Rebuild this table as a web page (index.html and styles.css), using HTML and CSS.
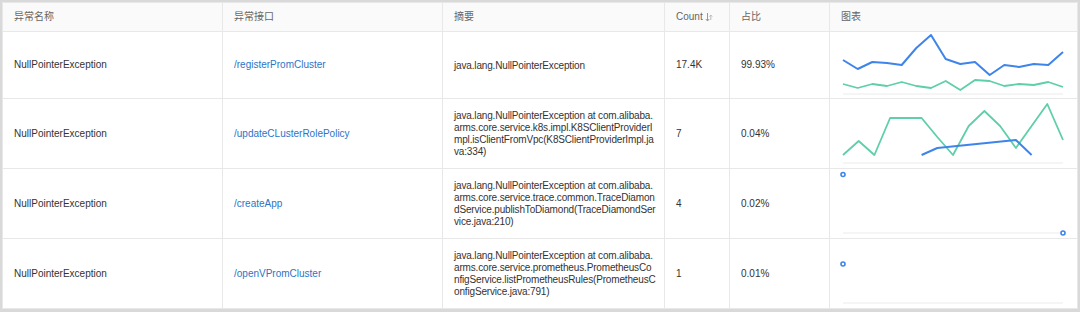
FILE: index.html
```html
<!DOCTYPE html>
<html lang="zh">
<head>
<meta charset="utf-8">
<title>异常列表</title>
<link rel="stylesheet" href="styles.css">
</head>
<body>
<div class="frame">
<table class="grid">
  <colgroup>
    <col class="c1"><col class="c2"><col class="c3"><col class="c4"><col class="c5"><col class="c6">
  </colgroup>
  <thead>
    <tr>
      <th>异常名称</th>
      <th>异常接口</th>
      <th>摘要</th>
      <th><span class="sort">Count <svg class="sort-ico" width="8" height="10" viewBox="0 0 8 10"><path d="M2.5 1v8M0.8 7l1.7 2 1.7-2" fill="none" stroke="#999" stroke-width="1"/><path d="M5.8 8V3M4.4 4.6l1.4-1.6 1.4 1.6" fill="none" stroke="#bbb" stroke-width="1"/></svg></span></th>
      <th>占比</th>
      <th>图表</th>
    </tr>
  </thead>
  <tbody>
    <tr class="r1">
      <td>NullPointerException</td>
      <td><a class="link" href="#">/registerPromCluster</a></td>
      <td class="sum">java.lang.NullPointerException</td>
      <td>17.4K</td>
      <td>99.93%</td>
      <td class="chart">
        <svg class="spark" width="247" height="62" viewBox="0 0 247 62">
          <line x1="13" y1="60" x2="233" y2="60" class="axis"/>
          <polyline class="blue" points="13,26 27.7,35 42.3,28 57,29 71.7,31 86.3,14 101,1 115.7,25 130.3,30 145,28 159.7,41 174.3,31 189,33 203.7,30 218.3,31 233,18"/>
          <polyline class="green" points="13,50 27.7,54 42.3,50 57,52 71.7,48 86.3,52 101,54 115.7,47 130.3,56 145,46 159.7,47 174.3,52 189,50 203.7,51 218.3,48 233,53"/>
        </svg>
      </td>
    </tr>
    <tr>
      <td>NullPointerException</td>
      <td><a class="link" href="#">/updateCLusterRolePolicy</a></td>
      <td class="sum">java.lang.NullPointerException at com.alibaba.arms.core.service.k8s.impl.K8SClientProviderImpl.isClientFromVpc(K8SClientProviderImpl.java:334)</td>
      <td>7</td>
      <td>0.04%</td>
      <td class="chart">
        <svg class="spark" width="247" height="62" viewBox="0 0 247 62">
          <line x1="13" y1="60" x2="233" y2="60" class="axis"/>
          <polyline class="green" points="13,52 28.7,38 44.4,52 60.1,15 75.9,15 91.6,15 107.3,34 123,52 138.7,23 154.4,8 170.1,23 185.9,45 201.6,23 217.3,1 233,37"/>
          <polyline class="blue" points="91.6,52 107.3,45 185.9,37 201.6,52"/>
        </svg>
      </td>
    </tr>
    <tr>
      <td>NullPointerException</td>
      <td><a class="link" href="#">/createApp</a></td>
      <td class="sum">java.lang.NullPointerException at com.alibaba.arms.core.service.trace.common.TraceDiamondService.publishToDiamond(TraceDiamondService.java:210)</td>
      <td>4</td>
      <td>0.02%</td>
      <td class="chart">
        <svg class="spark" width="247" height="62" viewBox="0 0 247 62">
          <line x1="13" y1="60" x2="233" y2="60" class="axis"/>
          <circle class="dot" cx="13" cy="1.5" r="2"/>
          <circle class="dot" cx="233" cy="60" r="2"/>
        </svg>
      </td>
    </tr>
    <tr>
      <td>NullPointerException</td>
      <td><a class="link" href="#">/openVPromCluster</a></td>
      <td class="sum">java.lang.NullPointerException at com.alibaba.arms.core.service.prometheus.PrometheusConfigService.listPrometheusRules(PrometheusConfigService.java:791)</td>
      <td>1</td>
      <td>0.01%</td>
      <td class="chart">
        <svg class="spark" width="247" height="62" viewBox="0 0 247 62">
          <line x1="13" y1="60" x2="233" y2="60" class="axis"/>
          <circle class="dot" cx="13" cy="21" r="2"/>
        </svg>
      </td>
    </tr>
  </tbody>
</table>
</div>
</body>
</html>
```

FILE: styles.css
```css
* { box-sizing: border-box; }
html, body { margin: 0; padding: 0; background: #fff; }
body {
  font-family: "Liberation Sans", "Noto Sans CJK SC", sans-serif;
  font-size: 10px;
  color: #333;
}
.frame {
  width: 1080px;
  border: 2px solid #d9d9d9;
  border-bottom-width: 3px;
  background: #fff;
}
.grid {
  width: 1076px;
  table-layout: fixed;
  border-collapse: separate;
  border-spacing: 0;
  border-top: 1px solid #e8e8e8;
  border-left: 1px solid #e8e8e8;
}
.c1 { width: 220px; }
.c2 { width: 220px; }
.c3 { width: 222px; }
.c4 { width: 65px; }
.c5 { width: 100px; }
.c6 { width: 248px; }
.grid th, .grid td {
  border-right: 1px solid #e8e8e8;
  border-bottom: 1px solid #e8e8e8;
  text-align: left;
  vertical-align: middle;
  padding: 0 11px;
}
.grid th {
  background: #fafafa;
  color: #666;
  font-weight: normal;
  height: 29px;
  line-height: 16px;
  font-size: 10px;
}
.grid td { line-height: 12px; }
.grid td.sum {
  padding: 11px 8px 10px 11px;
  word-break: break-all;
  line-height: 12px;
  letter-spacing: -0.16px;
}
.grid td.chart { padding: 2px 0; }
.link { color: #2b74c8; text-decoration: none; }
.sort { display: inline-flex; align-items: center; gap: 2px; }
.sort-ico { display: block; }
.spark { display: block; overflow: visible; }
.axis { stroke: #ececec; stroke-width: 1.2; }
.blue { fill: none; stroke: #3f84ea; stroke-width: 2; stroke-linejoin: round; }
.green { fill: none; stroke: #5ecfa8; stroke-width: 1.8; stroke-linejoin: round; }
.dot { fill: #fff; stroke: #3f84ea; stroke-width: 1.6; }
```
